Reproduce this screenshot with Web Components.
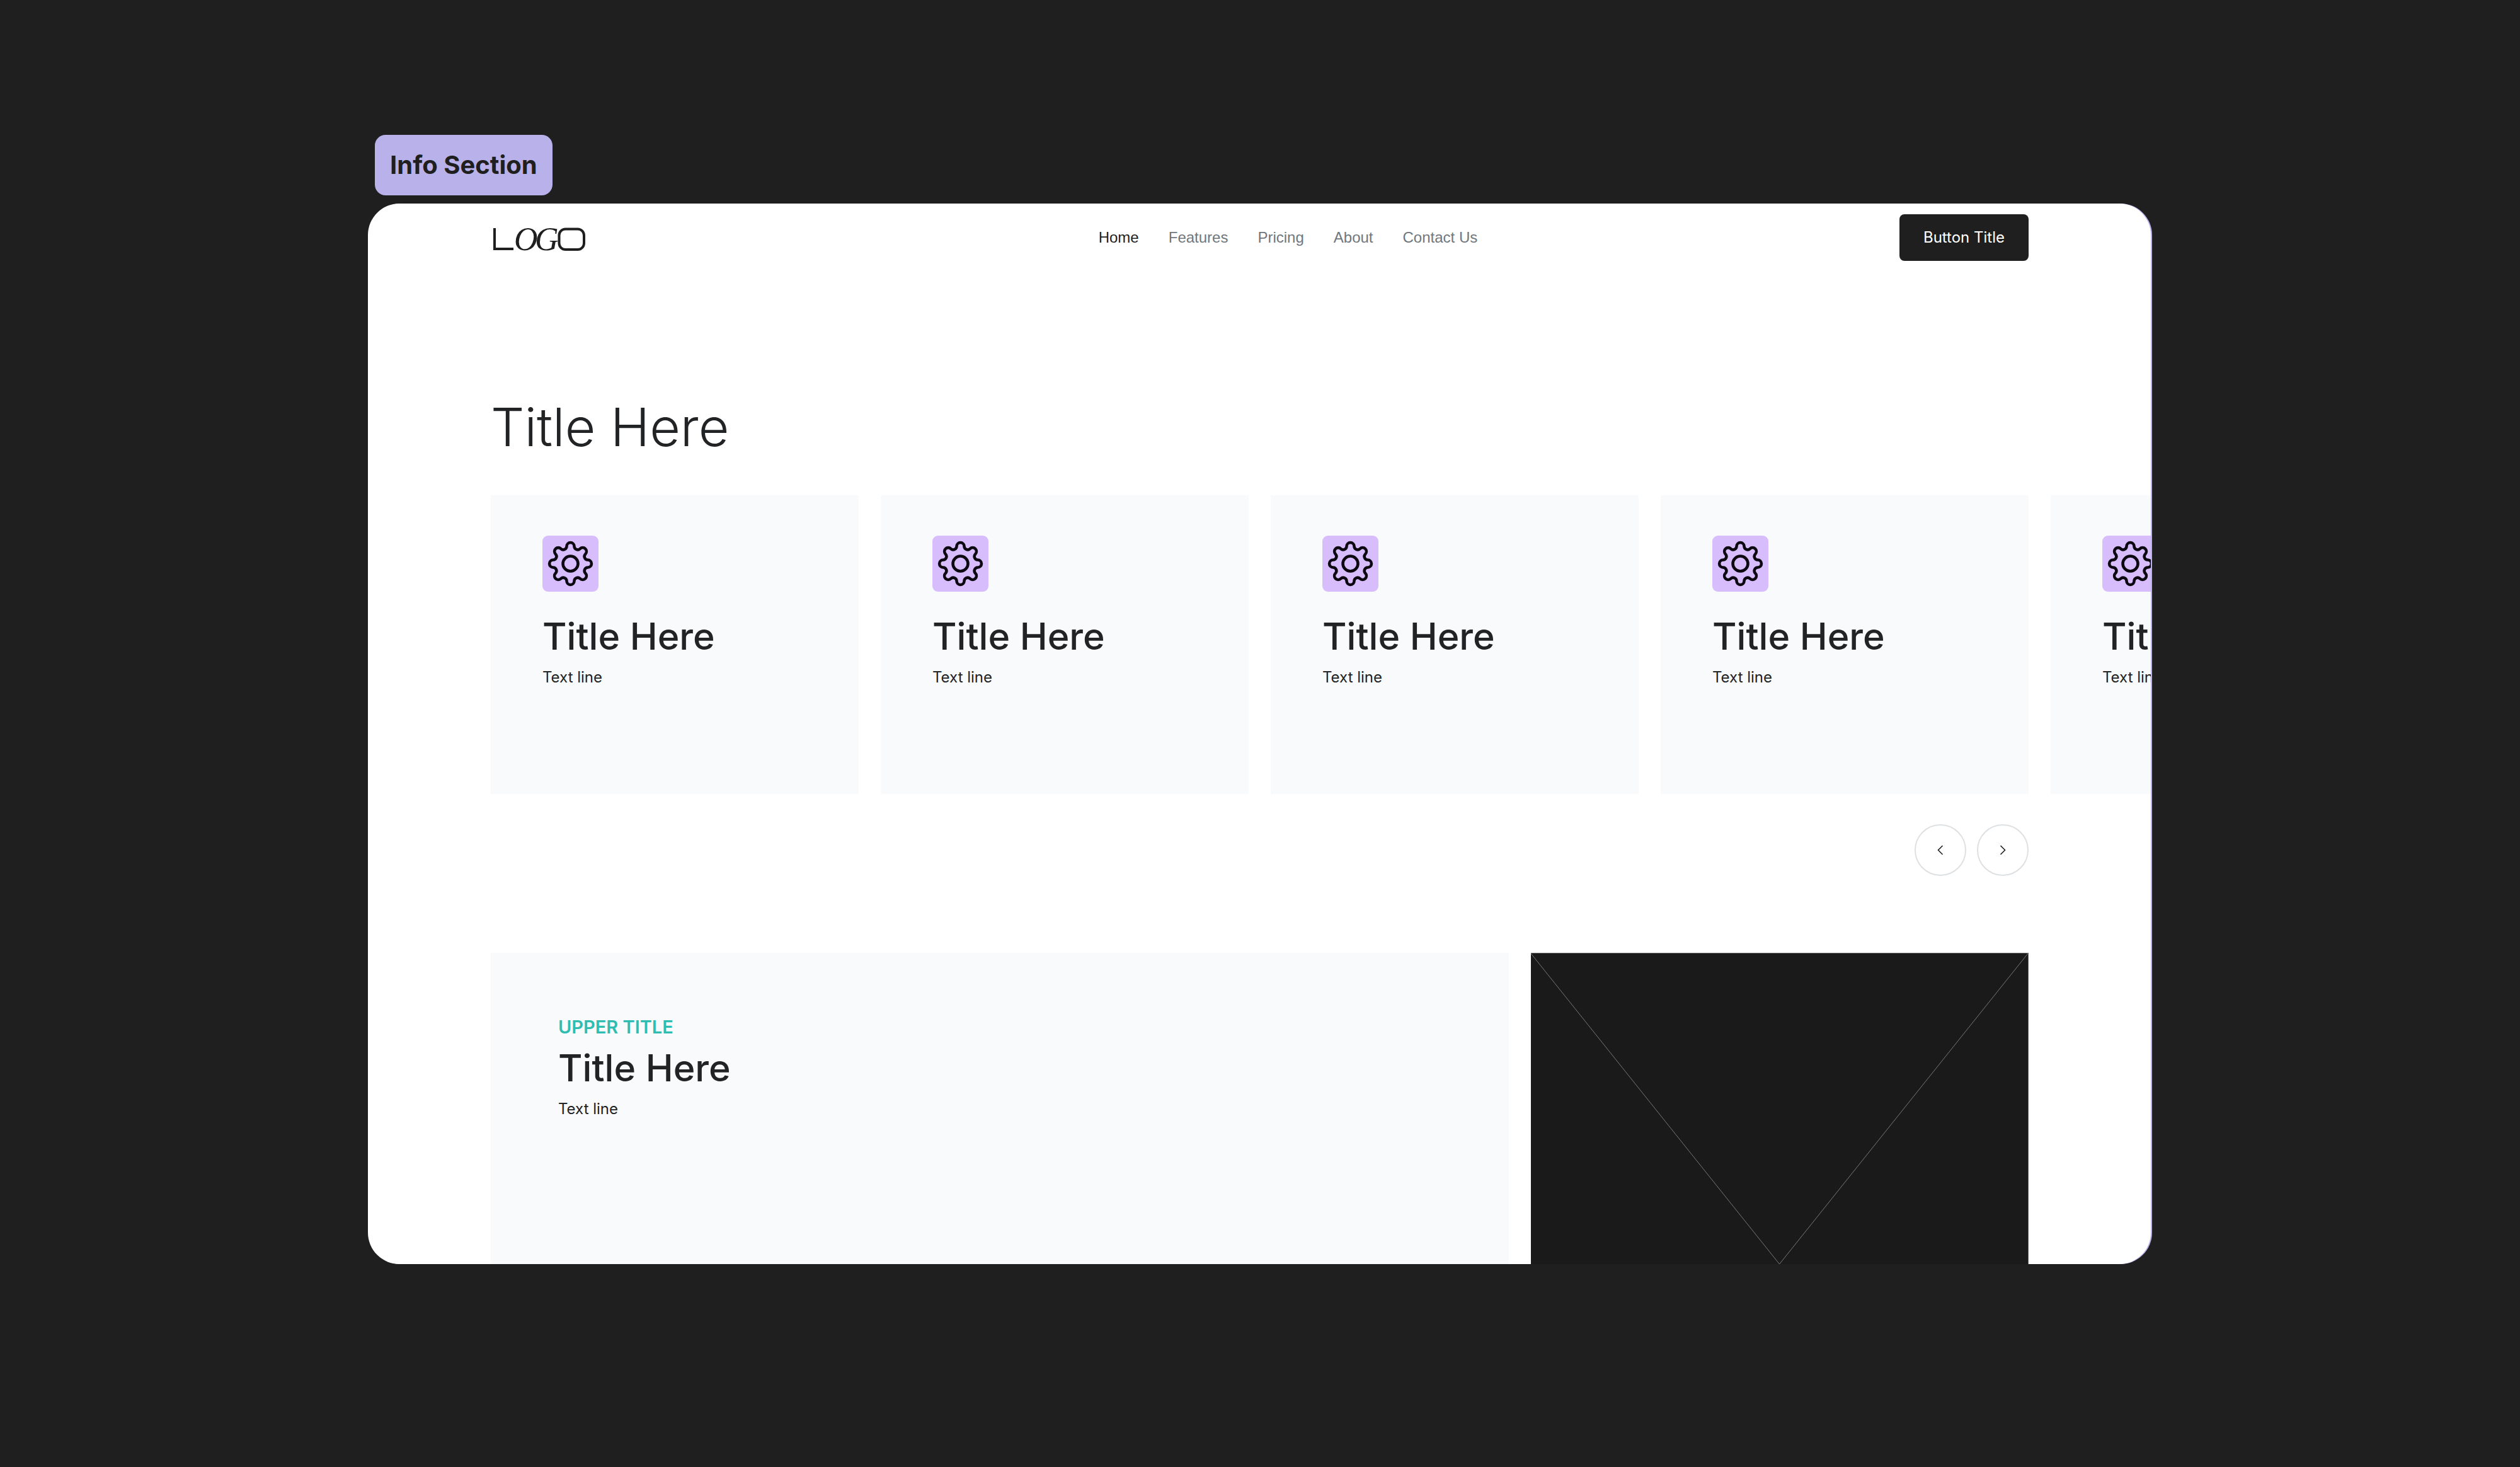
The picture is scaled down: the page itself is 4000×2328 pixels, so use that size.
<!DOCTYPE html>
<html lang="en">
<head>
<meta charset="utf-8">
<title>Info Section</title>
<style>
  html, body { margin: 0; }
  body { min-height: 100vh; background: #1f1f1f; color: #212325; font-family: Inter, "Liberation Sans", sans-serif; }
</style>
</head>
<body>
<info-stage>
  <section-badge slot="label">Info Section</section-badge>
  <site-nav></site-nav>
  <card-carousel heading="Title Here">
    <info-card heading="Title Here">Text line</info-card>
    <info-card heading="Title Here">Text line</info-card>
    <info-card heading="Title Here">Text line</info-card>
    <info-card heading="Title Here">Text line</info-card>
    <info-card heading="Title Here">Text line</info-card>
  </card-carousel>
  <feature-row>
    <feature-panel upper="UPPER TITLE" heading="Title Here">Text line</feature-panel>
    <image-placeholder></image-placeholder>
  </feature-row>
</info-stage>
<script>
const define = (name, render) => customElements.define(name, class extends HTMLElement {
  constructor() {
    super();
    this.attachShadow({ mode: 'open' });
  }
  connectedCallback() {
    this.shadowRoot.innerHTML = '<style>*{box-sizing:border-box}' + render(this);
  }
});

// Outline of an eight-toothed gear: round tooth caps joined by round valleys.
const gearPath = (() => {
  const c = 44.5, cap = 6, reach = 27.3, floor = 24.4, half = Math.PI / 8;
  const ax = reach * Math.cos(half), ay = reach * Math.sin(half);
  const k = floor - ax;
  const valley = (ay * ay + k * k - cap * cap) / (2 * (cap - k));
  const at = (r, t) => [c + r * Math.sin(t), c - r * Math.cos(t)];
  const mix = (a, b, f) => [a[0] + (b[0] - a[0]) * f, a[1] + (b[1] - a[1]) * f].map(n => n.toFixed(2)).join(' ');
  const f = cap / (cap + valley);
  let d = '';
  for (let i = 0; i < 8; i++) {
    const t = i * Math.PI / 4;
    const tooth = at(reach, t), before = at(floor + valley, t - half), after = at(floor + valley, t + half);
    const start = mix(tooth, before, f), end = mix(tooth, after, f);
    d += i ? `A${valley} ${valley} 0 0 0 ${start}` : `M${start}`;
    d += `A${cap} ${cap} 0 0 1 ${end}`;
    if (i === 7) d += `A${valley} ${valley} 0 0 0 ${mix(at(reach, 0), at(floor + valley, -half), f)}Z`;
  }
  return d;
})();

define('info-stage', () => `
  :host { display: block; padding: 214px 14.6% 0; }
  .label { display: flex; padding-left: 11px; margin-bottom: 13px; }
  main { margin-right: 2px; background: #fff; border-radius: 50px; box-shadow: 2px 0 0 #b9b2ea; overflow: hidden; }
</style>
<div class="label"><slot name="label"></slot></div>
<main><slot></slot></main>`);

define('section-badge', () => `
  :host { display: block; background: #b9b2ea; color: #1f1f1f; border-radius: 17px; padding: 0 24px; font-size: 40px; font-weight: 700; line-height: 96px; }
</style>
<slot></slot>`);

define('brand-logo', () => `
  :host { display: block; }
  svg { display: block; }
</style>
<svg width="150" height="62" viewBox="0 -11 150 62" fill="#1f1f1f" role="img" aria-label="LOGO">
  <rect x="4" y="5" width="4" height="35"/>
  <rect x="4" y="36" width="32" height="4"/>
  <text x="37 70" y="40" font-family="Liberation Serif, serif" font-style="italic" font-size="52">OG</text>
  <rect x="108.500" y="6.500" width="39.500" height="32.500" rx="10" fill="none" stroke="#1f1f1f" stroke-width="4"/>
</svg>`);

define('site-nav', () => `
  :host { display: block; padding: 17px 194px 0 195px; }
  header { display: flex; justify-content: space-between; align-items: center; }
  brand-logo { width: 295px; }
  nav { display: flex; gap: 47px; font: 24px/36px "Liberation Sans", sans-serif; }
  a { color: #6f777d; text-decoration: none; }
  a[aria-current] { color: #1f1f1f; }
  button { height: 74px; padding: 0 38px; border: 0; border-radius: 8px; background: #1f1f1f; color: #fff; font: 400 24px/36px Inter, sans-serif; }
</style>
<header>
  <brand-logo></brand-logo>
  <nav aria-label="Main">
    <a href="#" aria-current="page">Home</a>
    <a href="#">Features</a>
    <a href="#">Pricing</a>
    <a href="#">About</a>
    <a href="#">Contact Us</a>
  </nav>
  <button type="button">Button Title</button>
</header>`);

define('card-carousel', el => `
  :host { display: block; padding: 214px 194px 0 195px; }
  h1 { margin: 0 0 58px; font-size: 84px; font-weight: 300; line-height: 100px; }
  .track { display: grid; grid-auto-flow: column; grid-auto-columns: calc((100% - 105px) / 4); gap: 35px; }
  .controls { display: flex; justify-content: flex-end; gap: 17px; margin-top: 48px; }
  button { width: 82px; height: 82px; padding: 0; border: 2px solid #dee1e3; border-radius: 50%; background: #fff; display: grid; place-items: center; }
</style>
<h1>${el.getAttribute('heading')}</h1>
<div class="track"><slot></slot></div>
<div class="controls">
  <button type="button" aria-label="Previous"><svg width="16" height="16" viewBox="0 0 16 16" fill="none" stroke="#1f1f1f" stroke-width="1.600"><path d="M11.500 1L4.500 8L11.500 15"/></svg></button>
  <button type="button" aria-label="Next"><svg width="16" height="16" viewBox="0 0 16 16" fill="none" stroke="#1f1f1f" stroke-width="1.600"><path d="M4.500 1L11.500 8L4.500 15"/></svg></button>
</div>`);

define('gear-icon', () => `
  :host { display: block; }
  svg { display: block; border-radius: 9px; background: #d7bdfb; }
</style>
<svg width="89" height="89" viewBox="0 0 89 89" fill="none" stroke="#0c0a10" stroke-width="4.600" aria-hidden="true">
  <path d="${gearPath}"/><circle cx="44.500" cy="44.500" r="12"/>
</svg>`);

define('info-card', el => `
  :host { display: block; min-height: 474px; box-sizing: border-box; padding: 64px 82px; background: #f9fafc; }
  h2 { margin: 36px 0 12px; font-size: 59px; font-weight: 500; line-height: 70px; white-space: nowrap; }
  p { margin: 0; font-size: 24px; line-height: 36px; white-space: nowrap; }
</style>
<gear-icon></gear-icon>
<h2>${el.getAttribute('heading')}</h2>
<p><slot></slot></p>`);

define('feature-row', () => `
  :host { display: grid; grid-template-columns: 1616fr 790fr; gap: 35px; padding: 122px 194px 0 195px; min-height: 494px; }
</style>
<slot></slot>`);

define('feature-panel', el => `
  :host { display: block; padding: 100px 107px; background: #f9fafc; }
  .upper { margin: 0 0 12px; color: #2ebdb0; font-size: 29px; font-weight: 600; line-height: 36px; }
  h2 { margin: 0 0 12px; font-size: 59px; font-weight: 500; line-height: 70px; }
  .text { margin: 0; font-size: 24px; line-height: 36px; }
</style>
<p class="upper">${el.getAttribute('upper')}</p>
<h2>${el.getAttribute('heading')}</h2>
<p class="text"><slot></slot></p>`);

define('image-placeholder', () => `
  :host { display: grid; background: #1a1a1a; border-top: 1px solid #6b6b6b; border-right: 1px solid #6b6b6b; }
  svg { display: block; width: 100%; height: 100%; }
</style>
<svg stroke="#777" role="img" aria-label="Image placeholder">
  <line x1="0" y1="0" x2="50%" y2="100%"/><line x1="50%" y1="100%" x2="100%" y2="0"/>
</svg>`);
</script>
</body>
</html>
